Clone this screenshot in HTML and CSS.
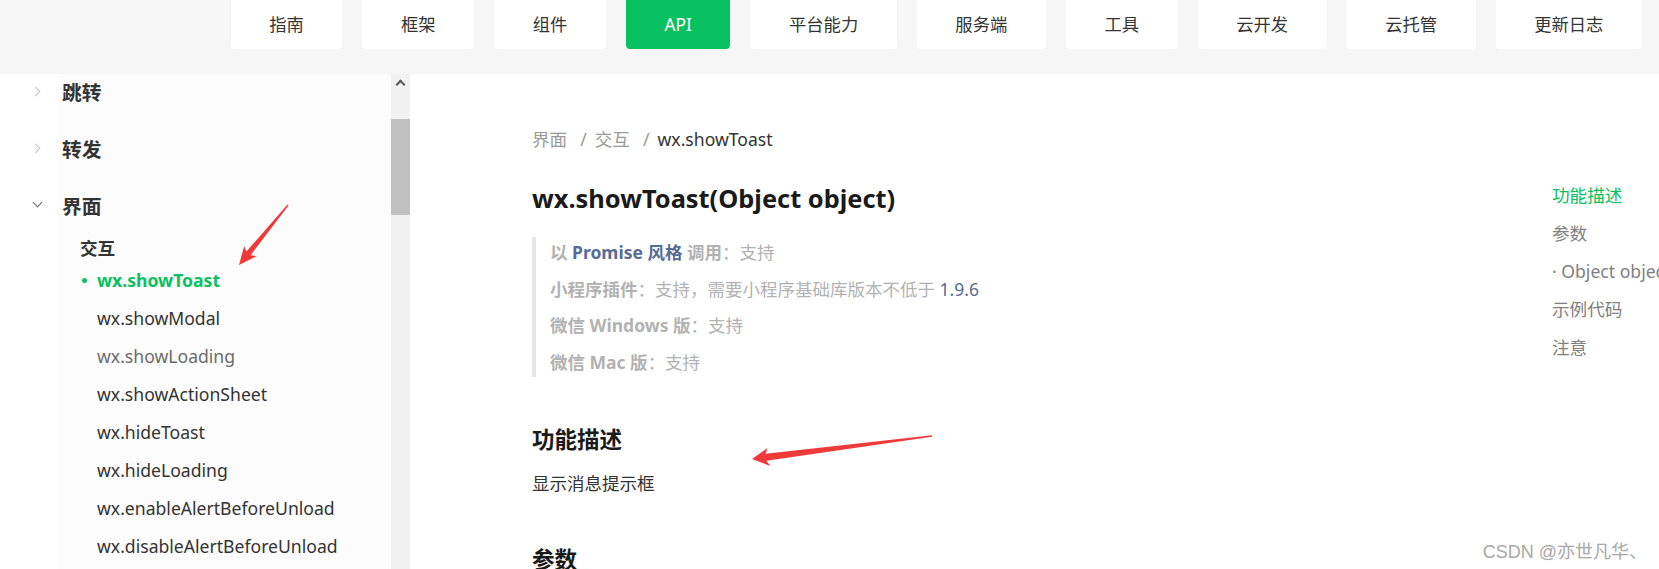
FILE: index.html
```html
<!DOCTYPE html>
<html lang="zh-CN">
<head>
  <meta charset="UTF-8">
  <title>wx.showToast | 微信开放文档</title>
  <link rel="stylesheet" href="styles.css">
</head>
<body>
  <header class="topbar">
    <a class="nav-btn">指南</a>
    <a class="nav-btn">框架</a>
    <a class="nav-btn">组件</a>
    <a class="nav-btn active">API</a>
    <a class="nav-btn">平台能力</a>
    <a class="nav-btn">服务端</a>
    <a class="nav-btn">工具</a>
    <a class="nav-btn">云开发</a>
    <a class="nav-btn">云托管</a>
    <a class="nav-btn">更新日志</a>
  </header>

  <div class="main">
    <aside class="sidebar">
      <ul class="menu">
        <li class="group"><span class="arrow closed"></span>跳转</li>
        <li class="group"><span class="arrow closed"></span>转发</li>
        <li class="group"><span class="arrow open"></span>界面</li>
        <li class="sub-title">交互</li>
        <li class="item current">wx.showToast</li>
        <li class="item">wx.showModal</li>
        <li class="item visited">wx.showLoading</li>
        <li class="item">wx.showActionSheet</li>
        <li class="item">wx.hideToast</li>
        <li class="item">wx.hideLoading</li>
        <li class="item">wx.enableAlertBeforeUnload</li>
        <li class="item">wx.disableAlertBeforeUnload</li>
      </ul>
    </aside>
    <div class="scrollbar">
      <span class="scroll-up"></span>
      <span class="scroll-thumb"></span>
    </div>

    <div class="content">
      <article class="article">
        <div class="crumbs">
          <span>界面</span><span class="sep">/</span><span>交互</span><span class="sep">/</span><span class="here">wx.showToast</span>
        </div>
        <h1>wx.showToast(Object object)</h1>
        <blockquote class="support">
          <p><b>以 <span class="em">Promise 风格</span> 调用</b>：支持</p>
          <p><b>小程序插件</b>：支持，需要小程序基础库版本不低于 <span class="ver">1.9.6</span></p>
          <p><b>微信 Windows 版</b>：支持</p>
          <p><b>微信 Mac 版</b>：支持</p>
        </blockquote>
        <h2>功能描述</h2>
        <p class="desc">显示消息提示框</p>
        <h2>参数</h2>
      </article>
      <nav class="toc">
        <div class="toc-item active">功能描述</div>
        <div class="toc-item">参数</div>
        <div class="toc-item">· Object object</div>
        <div class="toc-item">示例代码</div>
        <div class="toc-item">注意</div>
      </nav>
    </div>
  </div>

  <!-- red annotation arrows drawn over the screenshot -->
  <svg class="marks" width="1659" height="569" viewBox="0 0 1659 569">
    <polygon points="239,265 256.6,256.2 250.6,255.2 288.5,205.4 287.5,204.6 246.4,251.6 244.2,246" fill="#f03a3a"/>
    <polygon points="752,459 770.2,466 766.4,460.8 932,436.7 932,435.3 765.6,453.8 767.6,448" fill="#f03a3a"/>
  </svg>
  <div class="watermark">CSDN @亦世凡华、</div>
</body>
</html>
```

FILE: styles.css
```css
html, body {
  margin: 0;
  height: 569px;
  overflow: hidden;
}
body {
  position: relative;
  font-family: "Noto Sans", "Noto Sans CJK SC", sans-serif;
  color: #333;
  background: #fff;
}

.topbar {
  display: flex;
  justify-content: flex-end;
  gap: 20px;
  height: 74px;
  padding-right: 17px;
  background: #f6f6f6;
}
.nav-btn {
  height: 57px;
  margin-top: -8px;
  padding: 8px 38.6px 0;
  box-sizing: border-box;
  line-height: 49px;
  font-size: 17.3px;
  color: #333;
  background: #fff;
  border-radius: 4px;
}
.nav-btn.active {
  background: #07c160;
  color: #fff;
}

.main {
  display: flex;
  height: 495px;
}
.sidebar {
  width: 391px;
  background: linear-gradient(to right, #fff 58px, #fcfcfc 58px);
  overflow: hidden;
}
.menu {
  list-style: none;
  margin: -10px 0 0;
  padding: 0;
}
.group {
  position: relative;
  height: 57px;
  line-height: 57px;
  padding-left: 62px;
  font-size: 19.8px;
  font-weight: bold;
  color: #333;
}
.arrow {
  position: absolute;
  left: 32px;
  top: 24px;
  width: 6px;
  height: 6px;
  border-right: 1.5px solid #c4c4c4;
  border-bottom: 1.5px solid #c4c4c4;
  transform: rotate(-45deg);
}
.arrow.open {
  left: 34px;
  top: 21px;
  border-color: #666;
  transform: rotate(45deg);
}
.sub-title {
  line-height: 26px;
  padding-left: 80px;
  font-size: 17.6px;
  font-weight: bold;
  color: #333;
}
.item {
  position: relative;
  line-height: 38px;
  padding-left: 97px;
  font-size: 17.6px;
  color: #333;
}
.item.current {
  color: #07c160;
  font-weight: bold;
}
.item.current::before {
  content: "";
  position: absolute;
  left: 82px;
  top: 17px;
  width: 5px;
  height: 5px;
  border-radius: 50%;
  background: #07c160;
}
.item.visited {
  color: #6b6b6b;
}

.scrollbar {
  position: relative;
  width: 19px;
  background: #f1f1f1;
}
.scroll-up {
  position: absolute;
  left: 6px;
  top: 7px;
  width: 5px;
  height: 5px;
  border-left: 2px solid #555;
  border-top: 2px solid #555;
  transform: rotate(45deg);
}
.scroll-thumb {
  position: absolute;
  left: 0;
  right: 0;
  top: 45px;
  height: 96px;
  background: #c1c1c1;
}

.content {
  flex: 1;
  display: flex;
  min-width: 0;
}
.article {
  flex: 1;
  padding: 53px 0 0 122px;
}
.crumbs {
  line-height: 24px;
  font-size: 17.6px;
  color: #999;
}
.crumbs .sep {
  margin: 0 8px 0 13px;
}
.crumbs .here {
  color: #333;
}
h1 {
  margin: 30px 0 22px;
  line-height: 34px;
  font-size: 25.4px;
  font-weight: bold;
  color: #1a1a1a;
}
.support {
  margin: 0;
  padding-left: 14px;
  border-left: 4px solid #e6e6e6;
  font-size: 17.5px;
  color: #b2b2b2;
}
.support p {
  margin: 0;
  line-height: 30px;
}
.support p + p {
  margin-top: 6.7px;
}
.support b {
  color: #b2b2b2;
}
.support .em {
  color: #576b95;
}
.support .ver {
  color: #576b95;
}
h2 {
  margin: 47px 0 13px;
  line-height: 32px;
  font-size: 22.5px;
  font-weight: bold;
  color: #1a1a1a;
}
.desc {
  margin: 0;
  line-height: 28px;
  font-size: 17.5px;
  color: #333;
}

.toc {
  width: 107px;
  padding-top: 102px;
  white-space: nowrap;
  overflow: hidden;
}
.toc-item {
  line-height: 38px;
  font-size: 17.6px;
  color: #808080;
}
.toc-item.active {
  color: #07c160;
}

.marks {
  position: absolute;
  left: 0;
  top: 0;
  pointer-events: none;
}
.watermark {
  position: absolute;
  right: 12px;
  bottom: 6px;
  font-family: "Liberation Sans", "Noto Sans CJK SC", sans-serif;
  font-size: 18px;
  color: #a8a8a8;
  text-shadow: 0 0 2px #fff;
}
```
